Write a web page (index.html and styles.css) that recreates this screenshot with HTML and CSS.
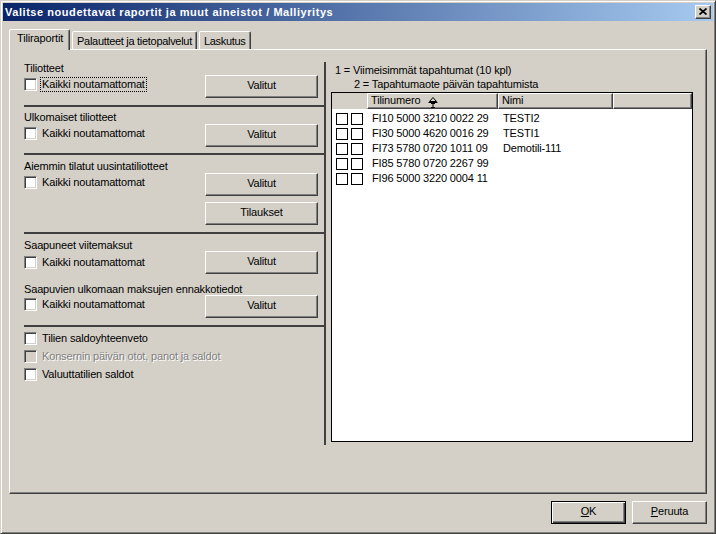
FILE: index.html
```html
<!DOCTYPE html>
<html lang="fi">
<head>
<meta charset="utf-8">
<title>Valitse noudettavat raportit ja muut aineistot / Malliyritys</title>
<link rel="stylesheet" href="styles.css">
</head>
<body>
<div class="window">
  <div class="caption">
    <span class="caption-title">Valitse noudettavat raportit ja muut aineistot / Malliyritys</span>
    <button class="caption-close" aria-label="Sulje">
      <svg width="8" height="7" viewBox="0 0 8 7"><path d="M0.5 0.5 L7.5 6.5 M7.5 0.5 L0.5 6.5" stroke="#000" stroke-width="1.7" fill="none"/></svg>
    </button>
  </div>
  <div class="client">
    <div class="tabs">
      <div class="tab tab-active">Tiliraportit</div>
      <div class="tab">Palautteet ja tietopalvelut</div>
      <div class="tab">Laskutus</div>
    </div>
    <div class="panel">
      <div class="left">
        <div class="sec sec-1">
          <div class="row">
            <div class="group">
              <div class="label">Tiliotteet</div>
              <div class="check"><span class="box"></span><span class="ctext ctext-focus">Kaikki noutamattomat</span></div>
            </div>
            <div class="btns"><button class="btn">Valitut</button></div>
          </div>
        </div>
        <div class="sec sec-2">
          <div class="row">
            <div class="group">
              <div class="label">Ulkomaiset tiliotteet</div>
              <div class="check"><span class="box"></span><span class="ctext">Kaikki noutamattomat</span></div>
            </div>
            <div class="btns"><button class="btn">Valitut</button></div>
          </div>
        </div>
        <div class="sec sec-3">
          <div class="row">
            <div class="group">
              <div class="label">Aiemmin tilatut uusintatiliotteet</div>
              <div class="check"><span class="box"></span><span class="ctext">Kaikki noutamattomat</span></div>
            </div>
            <div class="btns"><button class="btn">Valitut</button><button class="btn">Tilaukset</button></div>
          </div>
        </div>
        <div class="sec sec-4">
          <div class="row">
            <div class="group">
              <div class="label">Saapuneet viitemaksut</div>
              <div class="check check-low"><span class="box"></span><span class="ctext">Kaikki noutamattomat</span></div>
            </div>
            <div class="btns btns-up"><button class="btn">Valitut</button></div>
          </div>
          <div class="row row-next">
            <div class="group">
              <div class="label">Saapuvien ulkomaan maksujen ennakkotiedot</div>
              <div class="check check-high"><span class="box"></span><span class="ctext">Kaikki noutamattomat</span></div>
            </div>
            <div class="btns btns-up"><button class="btn">Valitut</button></div>
          </div>
        </div>
        <div class="sec sec-5">
          <div class="opt"><span class="box"></span><span class="ctext">Tilien saldoyhteenveto</span></div>
          <div class="opt opt-disabled"><span class="box box-disabled"></span><span class="ctext">Konsernin päivän otot, panot ja saldot</span></div>
          <div class="opt"><span class="box"></span><span class="ctext">Valuuttatilien saldot</span></div>
        </div>
      </div>
      <div class="right">
        <div class="legend">1 = Viimeisimmät tapahtumat (10 kpl)</div>
        <div class="legend legend-2">2 = Tapahtumaote päivän tapahtumista</div>
        <div class="list">
          <div class="lhead">
            <div class="hlead"></div>
            <div class="hcell hcell-num">Tilinumero
              <svg class="sort" width="10" height="12" viewBox="0 0 10 12"><path d="M1.5 5.5 L5 1.5 L8.5 5.5 Z" fill="none" stroke="#000"/><path d="M0.5 6.5 H9.5 M5 7 V11 M3 7.5 H7 M3 11.5 H7" stroke="#000" fill="none"/></svg>
            </div>
            <div class="hcell hcell-name">Nimi</div>
            <div class="hcell hcell-rest"></div>
          </div>
          <div class="lrows">
            <div class="lrow"><div class="llead"><span class="lbox"></span><span class="lbox"></span></div><div class="lnum">FI10 5000 3210 0022 29</div><div class="lname">TESTI2</div></div>
            <div class="lrow"><div class="llead"><span class="lbox"></span><span class="lbox"></span></div><div class="lnum">FI30 5000 4620 0016 29</div><div class="lname">TESTI1</div></div>
            <div class="lrow"><div class="llead"><span class="lbox"></span><span class="lbox"></span></div><div class="lnum">FI73 5780 0720 1011 09</div><div class="lname">Demotili-111</div></div>
            <div class="lrow"><div class="llead"><span class="lbox"></span><span class="lbox"></span></div><div class="lnum">FI85 5780 0720 2267 99</div><div class="lname"></div></div>
            <div class="lrow"><div class="llead"><span class="lbox"></span><span class="lbox"></span></div><div class="lnum">FI96 5000 3220 0004 11</div><div class="lname"></div></div>
          </div>
        </div>
      </div>
    </div>
    <div class="footer">
      <button class="btn btn-footer btn-default"><span><u>O</u>K</span></button>
      <button class="btn btn-footer"><span><u>P</u>eruuta</span></button>
    </div>
  </div>
</div>
</body>
</html>
```

FILE: styles.css
```css
* { box-sizing: border-box; }
html, body { margin: 0; padding: 0; }
body {
  width: 716px;
  height: 534px;
  overflow: hidden;
  background: #d4d0c8;
  font-family: "Liberation Sans", Arial, sans-serif;
  font-size: 11px;
  letter-spacing: -0.15px;
  color: #000;
}
button {
  font: inherit;
  letter-spacing: inherit;
  color: inherit;
  margin: 0;
}

.window {
  width: 716px;
  height: 534px;
  display: flex;
  flex-direction: column;
  padding: 2px;
  background: #d4d0c8;
  border: 1px solid;
  border-color: #d4d0c8 #404040 #404040 #d4d0c8;
  box-shadow: inset 1px 1px #fff, inset -1px -1px #808080;
}

.caption {
  flex: none;
  height: 18px;
  display: flex;
  align-items: center;
  justify-content: space-between;
  padding: 0 2px;
  background: linear-gradient(to right, #0a246a, #a6caf0);
}
.caption-title {
  color: #fff;
  font-weight: bold;
  letter-spacing: 0.55px;
  line-height: 18px;
  white-space: nowrap;
}
.caption-close {
  width: 16px;
  height: 14px;
  padding: 2px 0 0 3px;
  display: flex;
  align-items: flex-start;
  justify-content: flex-start;
  background: #d4d0c8;
  border: 1px solid;
  border-color: #fff #404040 #404040 #fff;
  box-shadow: inset -1px -1px #808080;
}
.caption-close svg { display: block; }

.client {
  flex: 1;
  display: flex;
  flex-direction: column;
  padding: 0 6px;
}

.tabs {
  flex: none;
  height: 20px;
  margin-top: 8px;
  display: flex;
  align-items: flex-end;
}
.tab {
  height: 18px;
  margin-left: 2px;
  padding: 3px 4px 0 4px;
  line-height: 13px;
  letter-spacing: -0.3px;
  white-space: nowrap;
  background: #d4d0c8;
  border: 1px solid;
  border-bottom: 0;
  border-color: #fff #404040 transparent #fff;
  border-radius: 2px 2px 0 0;
  box-shadow: inset -1px 0 #808080;
}
.tab-active {
  position: relative;
  z-index: 1;
  height: 21px;
  margin-left: 0;
  margin-bottom: -1px;
  padding: 2px 6px 0 7px;
  letter-spacing: -0.15px;
}

.panel {
  flex: none;
  height: 445px;
  display: flex;
  align-items: flex-start;
  padding: 12px 0 0 14px;
  border: 1px solid;
  border-color: #fff #404040 #404040 #fff;
  box-shadow: inset -1px -1px #808080;
}

.left {
  flex: none;
  width: 302px;
  height: 383px;
  border-right: 2px solid #404040;
}
.sec {
  padding-right: 6px;
  border-bottom: 2px solid #404040;
}
.sec-1 { padding-top: 0; padding-bottom: 7px; }
.sec-2 { padding-top: 4px; padding-bottom: 6px; }
.sec-3 { padding-top: 5px; padding-bottom: 7px; }
.sec-4 { padding-top: 5px; padding-bottom: 7px; }
.sec-5 { padding-top: 3px; border-bottom: 0; }

.row {
  display: flex;
  justify-content: space-between;
  align-items: flex-start;
}
.row-next { margin-top: 9px; }
.group {
  flex: 1;
  min-width: 0;
}
.label {
  line-height: 13px;
  white-space: nowrap;
}
.check {
  display: flex;
  align-items: center;
  margin-top: 3px;
}
.check-low { margin-top: 4px; }
.check-high { margin-top: 2px; }

.box {
  flex: none;
  width: 13px;
  height: 13px;
  background: #fff;
  border: 1px solid;
  border-color: #808080 #fff #fff #808080;
  box-shadow: inset 1px 1px #404040, inset -1px -1px #d4d0c8;
}
.box-disabled { background: #d4d0c8; }
.ctext {
  margin-left: 5px;
  line-height: 13px;
  white-space: nowrap;
}
.ctext-focus {
  margin-left: 4px;
  padding: 0 1px;
  outline: 1px dotted #000;
}

.btns {
  flex: none;
  display: flex;
  flex-direction: column;
  gap: 6px;
  margin-top: 13px;
}
.btns-up { margin-top: 12px; }
.btn {
  width: 113px;
  height: 23px;
  padding: 0 0 2px 0;
  display: flex;
  align-items: center;
  justify-content: center;
  line-height: 13px;
  background: #d4d0c8;
  border: 1px solid;
  border-color: #fff #404040 #404040 #fff;
  box-shadow: inset -1px -1px #808080;
}

.opt {
  display: flex;
  align-items: flex-start;
  height: 18px;
  padding-top: 2px;
}
.opt-disabled .ctext {
  color: #808080;
  text-shadow: 1px 1px #fff;
}

.right {
  flex: none;
  padding: 1px 0 0 5px;
}
.legend {
  line-height: 14px;
  padding-left: 4px;
  white-space: nowrap;
}
.legend-2 { padding-left: 23px; }

.list {
  width: 362px;
  height: 350px;
  margin-top: 1px;
  background: #fff;
  border: 1px solid #000;
}
.lhead {
  display: flex;
  height: 16px;
  background: #d4d0c8;
}
.hlead { flex: none; width: 35px; }
.hcell {
  display: flex;
  align-items: flex-start;
  padding-left: 3px;
  line-height: 13px;
  white-space: nowrap;
  background: #d4d0c8;
  border: 1px solid;
  border-color: #fff #404040 #404040 #fff;
  box-shadow: inset -1px -1px #808080;
}
.hcell-num { flex: none; width: 131px; }
.hcell-name { flex: none; width: 115px; }
.hcell-rest { flex: 1; }
.sort {
  display: block;
  margin: 2px 0 0 8px;
}

.lrows { padding-top: 2px; }
.lrow {
  display: flex;
  align-items: center;
  height: 15px;
  line-height: 13px;
  white-space: nowrap;
}
.llead {
  flex: none;
  width: 35px;
  display: flex;
  gap: 3px;
  padding-left: 4px;
}
.lbox {
  width: 12px;
  height: 12px;
  background: #fff;
  border: 1px solid #000;
}
.lnum { flex: none; width: 131px; padding-left: 5px; }
.lname { flex: none; width: 115px; padding-left: 5px; }

.footer {
  flex: none;
  display: flex;
  justify-content: flex-end;
  gap: 6px;
  margin-top: 7px;
}
.btn-footer { width: 75px; }
.btn-default {
  border-color: #000;
  box-shadow: inset 1px 1px #fff, inset -1px -1px #404040, inset -2px -2px #808080;
}
```
